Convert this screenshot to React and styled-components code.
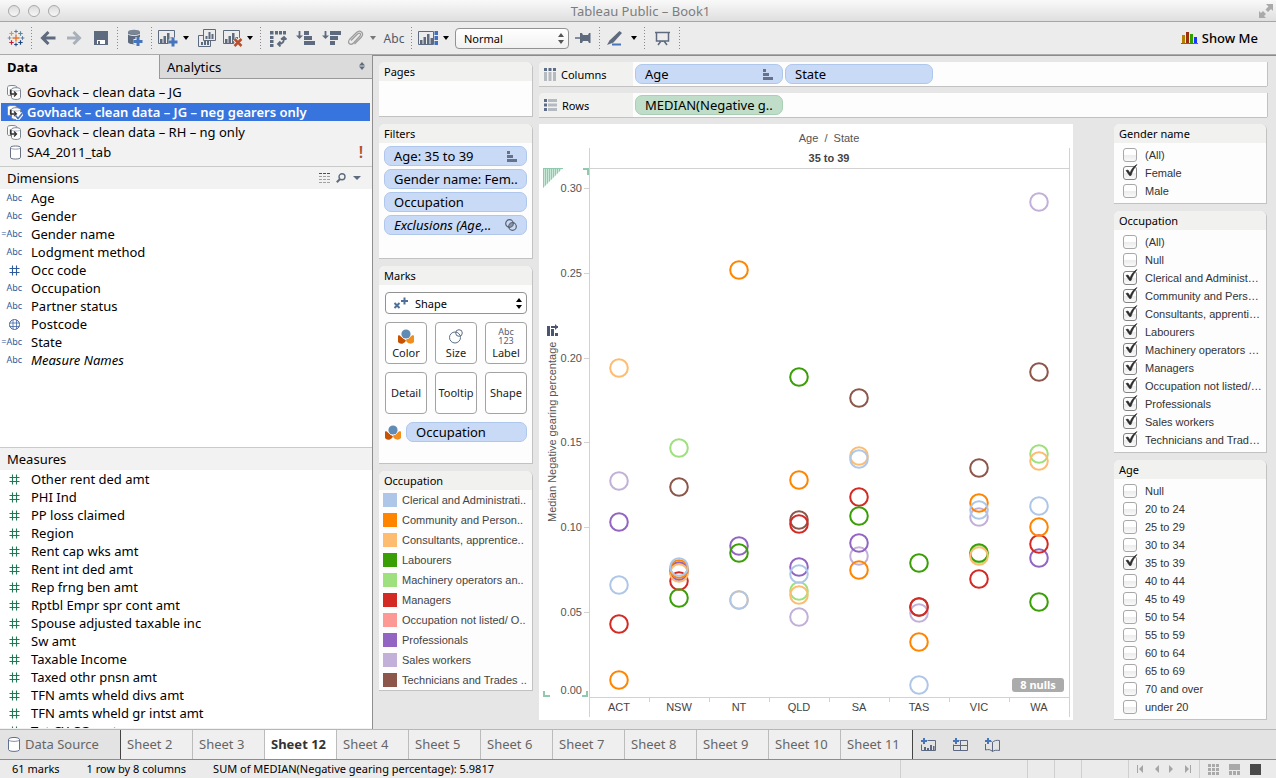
import React, { useState } from "react";
import styled, { createGlobalStyle, css } from "styled-components";

const UI = `"Noto Sans", "Open Sans", sans-serif`;
const ARIAL = `"Liberation Sans", Arial, sans-serif`;
const SLATE = "#5e6b7e";

const Global = createGlobalStyle`
  *, *::before, *::after { box-sizing: border-box; }
  body { margin: 0; font-family: ${UI}; font-size: 13px; color: #000; background: #e6e6e6; }
  h1, h2, ul, ol, p, fieldset, legend { margin: 0; padding: 0; border: 0; font-weight: 400; }
  ul, ol { list-style: none; }
  button { font-family: inherit; color: inherit; padding: 0; border: 0; background: none; cursor: pointer; }
  svg { display: block; flex: none; }
`;

/* ---------- window frame ---------- */
const Window = styled.div`
  display: flex;
  flex-direction: column;
  height: 100vh;
  min-width: 1000px;
  overflow: hidden;
`;
const TitleBar = styled.header`
  flex: none;
  display: grid;
  grid-template-columns: 1fr auto 1fr;
  align-items: center;
  height: 22px;
  padding: 0 3px 0 8px;
  background: linear-gradient(#f9f9f9, #dfdfdf);
  border-bottom: 1px solid #a6a6a6;
`;
const Lights = styled.div`
  display: flex;
  gap: 8px;
`;
const Light = styled.button`
  width: 12px;
  height: 12px;
  border-radius: 50%;
  border: 1px solid #a9a9a9;
  background: linear-gradient(#dcdcdc, #f7f7f7);
`;
const Title = styled.h1`
  font-size: 13px;
  line-height: 20px;
  color: #7d7d7d;
`;
const Expand = styled.button`
  justify-self: end;
`;

/* ---------- toolbar ---------- */
const Toolbar = styled.nav`
  flex: none;
  display: flex;
  align-items: center;
  height: 33px;
  padding-left: 3px;
  background: #ececec;
  border-bottom: 1px solid #aaa;
`;
const Tool = styled.button`
  flex: none;
  display: flex;
  align-items: center;
  justify-content: center;
  width: ${(p) => p.$w}px;
  height: 24px;
  font-size: 12px;
  color: #4e5a6b;
`;
const Sep = styled.span`
  flex: none;
  width: 1px;
  height: 22px;
  margin: 0 3px;
  background: repeating-linear-gradient(#8a8a8a 0 1px, transparent 1px 3px);
`;
const Caret = styled.span`
  width: 0;
  height: 0;
  border: ${(p) => p.$size || 3}px solid transparent;
  border-top: 4px solid ${(p) => p.$color || "#000"};
  border-bottom: 0;
`;
const SelectBox = styled.label`
  position: relative;
  display: flex;
  align-items: center;
  flex: none;
  width: ${(p) => p.$w};
  height: ${(p) => p.$h}px;
  margin: ${(p) => p.$m || 0};
`;
const Select = styled.select`
  appearance: none;
  width: 100%;
  height: 100%;
  padding: 0 16px 0 ${(p) => p.$pad}px;
  border: 1px solid #929292;
  border-radius: 4px;
  background: ${(p) => (p.$flat ? "#fff" : "linear-gradient(#fff, #f1f1f1)")};
  font: 11px ${UI};
  color: #000;
`;
const SelectIcon = styled.span`
  position: absolute;
  left: 8px;
  pointer-events: none;
`;
const SelectArrows = styled.span`
  position: absolute;
  right: 5px;
  pointer-events: none;
`;
const ShowMe = styled.button`
  display: flex;
  align-items: center;
  gap: 4px;
  margin: 0 18px 0 auto;
  font-size: 13px;
  font-weight: 500;
`;

/* ---------- data pane ---------- */
const Main = styled.main`
  flex: 1;
  display: flex;
  min-height: 0;
`;
const DataPane = styled.aside`
  flex: 0 0 373px;
  display: flex;
  flex-direction: column;
  min-height: 0;
  padding-bottom: 1px;
  background: #f2f2f2;
  border-right: 1px solid #8f8f8f;
`;
const PaneTabs = styled.div`
  display: flex;
  height: 24px;
`;
const PaneTab = styled.button`
  display: flex;
  align-items: center;
  justify-content: space-between;
  width: 159px;
  padding: 0 7px;
  font-size: 13px;
  text-align: left;
  ${(p) =>
    p.$active
      ? css`
          font-weight: 700;
        `
      : css`
          flex: 1;
          background: #dbdbdb;
          border-left: 1px solid #999;
          border-bottom: 1px solid #999;
        `}
`;
const Sources = styled.ul`
  padding: 3px 2px 4px 1px;
`;
const Source = styled.li`
  display: flex;
  align-items: center;
  height: 20px;
  padding: 0 6px;
  gap: 4px;
  line-height: 18px;
  ${(p) =>
    p.$selected &&
    css`
      height: 18px;
      margin: 1px 0;
      color: #fff;
      background: #3874dd;
      font-weight: 600;
    `}
`;
const Alert = styled.span`
  width: 2px;
  height: 12px;
  margin: 0 2px 0 auto;
  color: #b5502a;
  font-size: 16px;
  font-weight: 600;
  line-height: 12px;
  display: flex;
  justify-content: center;
`;
const FieldGroup = styled.section`
  flex: 1 1 0;
  display: flex;
  flex-direction: column;
  min-height: 0;
  border-top: 1px solid #c8cbc8;
`;
const GroupHead = styled.div`
  flex: none;
  display: flex;
  align-items: center;
  height: 22px;
  padding: 0 7px;
`;
const GroupTitle = styled.h2`
  flex: 1;
  font-size: 13px;
`;
const GroupButton = styled.button`
  display: flex;
  align-items: center;
  justify-content: center;
  width: 16px;
  height: 16px;
`;
const Fields = styled.ul`
  flex: 1;
  min-height: 0;
  overflow: hidden;
  background: #fff;
`;
const Field = styled.li`
  display: flex;
  align-items: center;
  height: 18px;
  gap: 9px;
  line-height: 18px;
  font-style: ${(p) => (p.$italic ? "italic" : "normal")};
`;
const FieldType = styled.span`
  display: flex;
  justify-content: flex-end;
  width: 22px;
  padding-right: ${(p) => (p.$glyph ? 2 : 0)}px;
  font-size: 9px;
  font-style: normal;
  color: #2f5a9e;
`;

/* ---------- workspace ---------- */
const Workspace = styled.div`
  flex: 1;
  display: flex;
  gap: 6px;
  min-width: 0;
  padding: 6px 9px 9px 6px;
  background: #e6e6e6;
  border-top: 1px solid #8b8b8b;
`;
const CardColumn = styled.div`
  flex: none;
  width: ${(p) => p.$w}px;
  min-width: 0;
  display: flex;
  flex-direction: column;
  gap: 7px;
`;
const Canvas = styled.div`
  flex: 1;
  display: flex;
  flex-direction: column;
  gap: 7px;
  min-width: 0;
`;
const CardBox = styled.section`
  flex: none;
  min-height: ${(p) => p.$min || 0}px;
  border-radius: 6px 6px 0 0;
  background: #fdfdfd;
  border-right: 1px solid #c2c2c2;
  border-bottom: 1px solid #c2c2c2;
`;
const CardTitle = styled.h2`
  height: 19px;
  padding-left: 5px;
  border-radius: 6px 5px 0 0;
  background: #f1f1ef;
  font-size: 11px;
  line-height: 19px;
  white-space: nowrap;
`;
const Pill = styled.button`
  display: flex;
  align-items: center;
  justify-content: space-between;
  width: ${(p) => p.$w || "100%"};
  height: 20px;
  padding: 0 9px;
  border: 1px solid ${(p) => (p.$green ? "#a9cfb5" : "#b0c7ec")};
  border-radius: 7px;
  background: ${(p) => (p.$green ? "#bfddc9" : "#c9daf7")};
  font-size: 13px;
  line-height: 18px;
  font-style: ${(p) => (p.$italic ? "italic" : "normal")};
  white-space: nowrap;
`;
const PillStack = styled.div`
  display: flex;
  flex-direction: column;
  gap: 3px;
  padding: 3px 5px;
`;
const MarksBody = styled.div`
  display: grid;
  grid-template-columns: repeat(3, 42px);
  justify-content: space-between;
  gap: 8px 0;
  padding: 7px 5px 0 6px;
`;
const WideRow = styled.div`
  grid-column: 1 / -1;
  display: flex;
  align-items: center;
  gap: 5px;
`;
const MarkButton = styled.button`
  display: flex;
  flex-direction: column;
  align-items: center;
  justify-content: ${(p) => (p.$icon ? "space-between" : "center")};
  height: 42px;
  padding: ${(p) => (p.$icon ? "4px 0 2px" : 0)};
  border: 1px solid #a3a3a3;
  border-radius: 4px;
  background: #fff;
  font-size: 11px;
  line-height: 16px;
  color: #222;
`;
const MarkGlyph = styled.span`
  display: flex;
  align-items: center;
  justify-content: center;
  height: 18px;
  text-align: center;
  font-size: 9px;
  line-height: 9px;
  color: #4f6180;
`;
const LegendItem = styled.li`
  display: flex;
  align-items: center;
  gap: 5px;
  height: 20px;
  padding-left: 4px;
  font: 11px ${ARIAL};
  color: #444;
  white-space: nowrap;
`;
const Swatch = styled.span`
  flex: none;
  width: 14px;
  height: 14px;
  background: ${(p) => p.$color};
`;
const Shelf = styled.div`
  flex: none;
  display: flex;
  align-items: center;
  gap: 2px;
  height: 24px;
  border-radius: 5px 0 0 0;
  background: #fdfdfd;
  box-shadow: 0 1px 0 #c2c2c2, 1px 0 0 #c2c2c2;
`;
const ShelfName = styled.div`
  display: flex;
  align-items: center;
  gap: 5px;
  width: 94px;
  height: 24px;
  padding-left: 5px;
  border-radius: 5px 0 0 0;
  background: #f1f1ef;
  font-size: 11px;
`;
const ViewRow = styled.div`
  flex: 1;
  display: flex;
  gap: 41px;
  min-height: 0;
`;
const View = styled.figure`
  position: relative;
  flex: 1;
  min-width: 0;
  margin: 0;
  background: #fff;
`;
const Chart = styled.svg`
  width: 100%;
  height: 100%;
  font-family: ${ARIAL};
  font-size: 11px;
  fill: #555;
`;
const NullBadge = styled.button`
  position: absolute;
  right: 9px;
  bottom: 28px;
  width: 52px;
  height: 14px;
  border-radius: 3px;
  background: #ababab;
  color: #fff;
  font-size: 11px;
  font-weight: 700;
  line-height: 14px;
`;
const Options = styled.div`
  padding: 3px 0 3px 9px;
`;
const Option = styled.label`
  display: flex;
  align-items: center;
  gap: 8px;
  height: 18px;
  font: 11px ${ARIAL};
  color: #333;
  white-space: nowrap;
`;
const TickBox = styled.span`
  position: relative;
  flex: none;
  width: 14px;
  height: 14px;
`;
const TickInput = styled.input`
  appearance: none;
  display: block;
  width: 14px;
  height: 14px;
  margin: 0;
  border: 1px solid ${(p) => (p.checked ? "#848484" : "#a8a8a8")};
  border-radius: 3px;
  background: linear-gradient(#fff 0 45%, #ececec 55%, #fafafa);
`;
const TickMark = styled.svg`
  position: absolute;
  left: 2px;
  top: -2px;
  pointer-events: none;
`;

/* ---------- sheet tabs and status ---------- */
const SheetBar = styled.nav`
  flex: none;
  display: flex;
  height: 31px;
  background: #e3e3e3;
  border-top: 1px solid #b7b7b7;
  border-bottom: 1px solid #8c8c8c;
`;
const SheetTab = styled.button`
  flex: none;
  display: flex;
  align-items: center;
  gap: 5px;
  width: ${(p) => p.$w || 72}px;
  padding: 0 0 1px ${(p) => (p.$w ? 8 : 6)}px;
  border-right: 1px solid ${(p) => (p.$dark ? "#444" : "#bcbcbc")};
  background: ${(p) => (p.$active ? "#fff" : p.$w ? "#e3e3e3" : "#efefef")};
  color: ${(p) => (p.$active ? "#333" : "#666")};
  font-size: 13px;
  font-weight: ${(p) => (p.$active ? 700 : 400)};
  white-space: nowrap;
`;
const NewSheetTools = styled.div`
  display: flex;
  align-items: center;
`;
const StatusBar = styled.footer`
  flex: none;
  display: flex;
  align-items: center;
  height: 18px;
  padding-left: 12px;
  background: #ebebeb;
  font-size: 11px;
  white-space: nowrap;
`;
const StatusText = styled.span`
  margin-right: 27px;
  padding-bottom: 1px;
`;
const StatusCells = styled.div`
  display: flex;
  height: 100%;
  margin-left: auto;
`;
const StatusCell = styled.div`
  display: flex;
  align-items: center;
  gap: ${(p) => p.$gap || 0}px;
  width: ${(p) => p.$w}px;
  padding-left: 8px;
  border-left: 1px solid #cfcfcf;
`;
const StatusButton = styled.button`
  display: flex;
`;

/* ---------- icons ---------- */
const Icon = ({ w = 20, h = 20, children, ...rest }) => (
  <svg width={w} height={h} viewBox={`0 0 ${w} ${h}`} fill="none" aria-hidden="true" {...rest}>
    {children}
  </svg>
);
const plus = (x, y, r) => `M${x - r} ${y}h${2 * r}M${x} ${y - r}v${2 * r}`;
const LogoIcon = () => (
  <Icon w={18} h={18}>
    <path d={plus(9, 9, 3.5)} stroke="#e8762c" strokeWidth="1.4" />
    <path d={plus(9, 2.5, 1.8)} stroke="#59799b" />
    <path d={plus(9, 15.5, 1.8)} stroke="#1f447e" />
    <path d={plus(2.5, 9, 1.8)} stroke="#6f8fae" />
    <path d={plus(15.5, 9, 1.8)} stroke="#59799b" />
    <path d={plus(4.5, 4.5, 2.2)} stroke="#eb912c" strokeWidth="1.2" />
    <path d={plus(13.5, 4.5, 2.2)} stroke="#5b879b" strokeWidth="1.2" />
    <path d={plus(4.5, 13.5, 2.2)} stroke="#c72035" strokeWidth="1.2" />
    <path d={plus(13.5, 13.5, 2.2)} stroke="#1f447e" strokeWidth="1.2" />
  </Icon>
);
const Arrow = ({ right }) => (
  <Icon w={16} h={14}>
    <path
      d={right ? "M1 7h12M7.500 1l6 6-6 6" : "M15.500 7H3M8.500 1l-6 6 6 6"}
      stroke={right ? "#a9b0b9" : SLATE}
      strokeWidth="3"
    />
  </Icon>
);
const SaveIcon = () => (
  <Icon w={14} h={14}>
    <path d="M0 0h14v14H0z" fill={SLATE} />
    <path d="M3 9h8v4H3z" fill="#fff" />
    <path d="M4 10h2v3H4z" fill={SLATE} />
  </Icon>
);
const PLUS_BLUE = "#4674bd";
const AddDataIcon = () => (
  <Icon w={16} h={18}>
    <path d="M1 3v10c0 3 12 3 12 0V3z" fill={SLATE} />
    <ellipse cx="7" cy="3" rx="6" ry="2.300" fill="#7a8696" />
    <path d="M1 4.800c1 2.200 11 2.200 12 0" stroke="#ececec" />
    <path d={plus(11, 12.5, 4.5)} stroke="#ececec" strokeWidth="5" />
    <path d={plus(11, 12.5, 4.5)} stroke={PLUS_BLUE} strokeWidth="3" />
  </Icon>
);
const Bars = ({ x = 0, y = 0 }) => (
  <path transform={`translate(${x} ${y})`} d="M0 6h2.500v4H0zM3.500 3H6v7H3.500zM7 0h2.500v10H7zM10.500 4H13v6h-2.500z" fill={SLATE} />
);
const AddSheetIcon = () => (
  <Icon w={20} h={18}>
    <path d="M.5 1.500h16v13H.5z" stroke={SLATE} />
    <Bars x={2} y={4} />
    <path d={plus(15, 13, 4.5)} stroke="#ececec" strokeWidth="5" />
    <path d={plus(15, 13, 4.5)} stroke={PLUS_BLUE} strokeWidth="3" />
  </Icon>
);
const DuplicateIcon = () => (
  <Icon w={18} h={18}>
    <path d="M.5 6.500h12v11H.5z" stroke={SLATE} />
    <path d="M3 13h2v3H3zM6 11h2v5H6zM9 12h2v4H9z" fill={SLATE} />
    <path d="M5.500.5h12v11h-12z" fill="#ececec" stroke={SLATE} />
    <path d="M7.500 7h2v3h-2zM10.500 3h2v7h-2zM13.500 5h2v5h-2z" fill={SLATE} />
  </Icon>
);
const ClearIcon = () => (
  <Icon w={20} h={18}>
    <path d="M.5 1.500h16v13H.5z" stroke={SLATE} />
    <Bars x={2} y={4} />
    <path d="M11.500 10l7 7M18.500 10l-7 7" stroke="#ececec" strokeWidth="4.500" />
    <path d="M11.500 10l7 7M18.500 10l-7 7" stroke="#b8502c" strokeWidth="2.500" />
  </Icon>
);
const SwapIcon = () => (
  <Icon w={18} h={17}>
    <path d="M1 1h3.500v3.500H1zM6 1h3v3.500H6zM10 1h3v3.500h-3zM14 1h3v3.500h-3zM1 6h3.500v3H1zM1 10h3.500v3H1zM1 14h3.500v3H1z" fill={SLATE} />
    <path d="M15 7.500c0 4.500-1 6.500-6 6.500M12 9.500L15 7l2.500 2.500M11.500 11.500L9 14l2.500 2.500" stroke={SLATE} strokeWidth="1.800" />
  </Icon>
);
const SortIcon = ({ desc }) => (
  <Icon w={19} h={16}>
    <path d="M3.500 1v6" stroke={SLATE} strokeWidth="1.800" />
    <path d="M0 5.500h7L3.500 9z" fill={SLATE} />
    <path
      d={desc ? "M8 1h11v4H8zM8 6h8v4H8zM8 11h5v4H8z" : "M8 1h5v4H8zM8 6h8v4H8zM8 11h11v4H8z"}
      fill={SLATE}
    />
  </Icon>
);
const ClipIcon = () => (
  <Icon w={17} h={17}>
    <path
      d="M4 10.500l6.500-6.500c2-2 4 0 2.500 2L6.500 13c-3 3-6.500 0-4-3.500L9.500 2.500c3.500-3.500 8 .5 5 4.500l-7 7"
      stroke="#9b9b9b"
      strokeWidth="1.200"
    />
  </Icon>
);
const FitIcon = () => (
  <Icon w={20} h={15}>
    <path d="M.5.5h15v13H.5z" stroke={SLATE} />
    <Bars x={2} y={3} />
    <path d="M16.500 0H20v4h-3.500zM16.500 5H20v4h-3.500zM16.500 10H20v4h-3.500z" fill="#3f6fc0" />
  </Icon>
);
const PinIcon = () => (
  <Icon w={16} h={12}>
    <path d="M0 6h6" stroke={SLATE} strokeWidth="1.500" />
    <path d="M5 1h2l1 2h5l1-2h1.500v10H14l-1-2H8l-1 2H5z" fill={SLATE} />
  </Icon>
);
const PenIcon = () => (
  <Icon w={16} h={15}>
    <path d="M12.500 0L15 2 6.500 11.500 0 14l2.500-4.500z" fill={SLATE} />
    <path d="M5 13.500h9" stroke={PLUS_BLUE} strokeWidth="2" />
  </Icon>
);
const PresentIcon = () => (
  <Icon w={15} h={15}>
    <path d="M0 1.500h15M1.500 2v8h12V2M7.500 10v1M6 10l-3 4M9 10l3 4" stroke={SLATE} strokeWidth="1.500" />
  </Icon>
);
const ShowMeIcon = () => (
  <Icon w={17} h={12}>
    <path d="M1 3h3v8H1z" fill="#b58200" />
    <path d="M5 0h3v11H5z" fill="#9c2f10" />
    <path d="M9 2h3v9H9z" fill="#2fa000" />
    <path d="M13 5h3v6h-3z" fill="#1a33ff" />
    <path d="M0 11.500h17" stroke="#667" />
  </Icon>
);
const ExpandIcon = () => (
  <Icon w={14} h={14}>
    <path d="M7 0h7v7l-2-2-3 3-2.500-2.500 3-3zM0 7l2 2 2-2 3 3-2 2 2 2H0z" fill="#aaa" />
  </Icon>
);
const UpDown = ({ color = "#555" }) => (
  <Icon w={6} h={11}>
    <path d="M3 0l3 4H0zM3 11L0 7h6z" fill={color} />
  </Icon>
);
const Cylinder = () => (
  <Icon w={12} h={15}>
    <path d="M.5 2.500v10c0 2.500 11 2.500 11 0v-10c0-2.700-11-2.700-11 0z" fill="#fff" stroke="#5e6f8f" />
    <path d="M.5 3c1 1.800 10 1.800 11 0" stroke="#5e6f8f" strokeWidth=".8" />
  </Icon>
);
const DatabaseIcon = () => (
  <Icon w={16} h={15}>
    <path d="M3.500 2.500v10c0 2 10 2 10 0v-10c0-2-10-2-10 0z" fill="#fff" stroke="#667082" />
    <path d="M3.500 3c1 1.500 9 1.500 10 0" stroke="#99a" />
  </Icon>
);
const ExtractIcon = ({ checked }) => (
  <Icon w={16} h={15}>
    <path d="M5 10.500H2.500c-1.500 0-2-.6-2-1.500V2.500C.5 1 2 .5 5 .5s5 .5 5 2v1" fill="#fff" stroke="#7d8592" />
    <path d="M4.500 4.500v8c0 2.600 9 2.600 9 0v-8c0-2.400-9-2.400-9 0z" fill="#fff" stroke="#7d8592" />
    <path d="M4.500 4.800c1 1.600 8 1.600 9 0" stroke="#b4bac4" />
    <path d="M3.500 4.500v4.500H9M7 6.500L9.500 9 7 11.500" stroke="#333" strokeWidth="1.300" />
    {checked && <path d="M8.500 10.500l2.500 3L15.500 8" stroke="#fff" strokeWidth="4" />}
    {checked && <path d="M8.500 10.500l2.500 3L15.500 8" stroke="#4a73b5" strokeWidth="1.600" />}
  </Icon>
);
const HashIcon = ({ color }) => (
  <Icon w={11} h={11}>
    <path d="M.5 3.500h10M.5 7.500h10M3.500.5v10M7.500.5v10" stroke={color} strokeWidth="1.100" />
  </Icon>
);
const GlobeIcon = () => (
  <Icon w={11} h={11}>
    <circle cx="5.500" cy="5.500" r="5" stroke="#4468a5" />
    <path d="M.5 4h10M.5 7.500h10M4 1v9M7.500 1v9" stroke="#4468a5" strokeWidth=".8" />
  </Icon>
);
const ListIcon = () => (
  <Icon w={12} h={10}>
    <path d="M0 .5h12" stroke="#444f60" strokeDasharray="3 1" />
    <path d="M0 3.500h12M0 6.500h12M0 9.500h12" stroke="#a2a2a2" strokeDasharray="3 1" />
  </Icon>
);
const FindIcon = () => (
  <Icon w={10} h={10}>
    <circle cx="6" cy="3.800" r="3" stroke={SLATE} strokeWidth="1.400" />
    <path d="M4 6L.8 9.200" stroke={SLATE} strokeWidth="2" />
  </Icon>
);
const SortPillIcon = () => (
  <Icon w={10} h={11}>
    <path d="M0 0h3v3H0zM0 4h6v3H0zM0 8h10v3H0z" fill="#66728a" />
  </Icon>
);
const SetIcon = () => (
  <Icon w={12} h={12}>
    <path d="M4 7.800C4 5 6 4 8 4.200 8 7 6.500 8 4 7.800z" fill="#8b95a4" />
    <circle cx="4.500" cy="4.500" r="3.800" stroke="#55606f" strokeWidth="1.200" />
    <circle cx="7.500" cy="7.500" r="3.800" stroke="#55606f" strokeWidth="1.200" />
  </Icon>
);
const ShapeIcon = () => (
  <Icon w={16} h={12}>
    <path d="M1.500 6l5 5M6.500 6l-5 5" stroke="#4f7099" strokeWidth="2" />
    <path d={plus(11.5, 4, 3.5)} stroke="#4f7099" strokeWidth="2" />
  </Icon>
);
const ColorIcon = () => (
  <Icon w={16} h={15}>
    <path d="M1 6a4.700 4.700 0 1 0 7 5.500z" fill="#c85200" />
    <path d="M15 6a4.700 4.700 0 1 1-6.500 6.500c-.5-1-.5-2 0-3z" fill="#f28e1c" />
    <circle cx="8" cy="5" r="5.200" fill="#fff" />
    <circle cx="8" cy="5" r="4.600" fill="#5f8bb5" />
  </Icon>
);
const SizeIcon = () => (
  <Icon w={14} h={15}>
    <circle cx="6" cy="8.500" r="5.500" stroke="#5c6e88" />
    <circle cx="10" cy="4" r="3.300" stroke="#5c6e88" />
  </Icon>
);
const ColumnsIcon = () => (
  <Icon w={12} h={13}>
    <path d="M0 0h3v3H0zM4.500 0h3v3h-3zM9 0h3v3H9z" fill="#5d6c86" />
    <path d="M0 4h3v9H0zM4.500 4h3v9h-3zM9 4h3v9H9z" fill="#b5bac1" />
  </Icon>
);
const RowsIcon = () => (
  <Icon w={13} h={12}>
    <path d="M0 0h3v3H0zM0 4.500h3v3H0zM0 9h3v3H0z" fill="#5d6c86" />
    <path d="M4 0h9v3H4zM4 4.500h9v3H4zM4 9h9v3H4z" fill="#b5bac1" />
  </Icon>
);
const NewIcon = ({ children }) => (
  <Icon w={16} h={14}>
    <path d="M6.500 2.500h8v10H.5V6.500" stroke="#5b6880" />
    {children}
    <path d={plus(3, 3, 3)} stroke={PLUS_BLUE} strokeWidth="2" />
  </Icon>
);
const NewStoryIcon = () => (
  <Icon w={16} h={14}>
    <path d="M.5 6v6c3-.8 5-.5 7 1.500V4.500C7 3.500 6.500 3 5.500 2.700M7.500 4.500c1.500-2 4-2.500 7-2v10c-3-.5-5.500-.3-7 1" stroke="#5b6880" />
    <path d={plus(3, 3, 3)} stroke={PLUS_BLUE} strokeWidth="2" />
  </Icon>
);

/* ---------- data ---------- */
const SOURCES = [
  { name: "Govhack – clean data – JG" },
  { name: "Govhack – clean data – JG – neg gearers only", selected: true },
  { name: "Govhack – clean data – RH – ng only" },
  { name: "SA4_2011_tab", plain: true, alert: true },
];
const DIMENSIONS = [
  ["Abc", "Age"],
  ["Abc", "Gender"],
  ["=Abc", "Gender name"],
  ["Abc", "Lodgment method"],
  ["#", "Occ code"],
  ["Abc", "Occupation"],
  ["Abc", "Partner status"],
  ["globe", "Postcode"],
  ["=Abc", "State"],
  ["Abc", "Measure Names", true],
];
const MEASURES = [
  "Other rent ded amt", "PHI Ind", "PP loss claimed", "Region", "Rent cap wks amt", "Rent int ded amt",
  "Rep frng ben amt", "Rptbl Empr spr cont amt", "Spouse adjusted taxable inc", "Sw amt", "Taxable Income",
  "Taxed othr pnsn amt", "TFN amts wheld divs amt", "TFN amts wheld gr intst amt", "Tot CY CG amt",
];
const OCCUPATIONS = [
  { id: "cler", color: "#aec7e8", legend: "Clerical and Administrati..", filter: "Clerical and Administ…" },
  { id: "comm", color: "#ff8500", legend: "Community and Person..", filter: "Community and Pers…" },
  { id: "cons", color: "#fdbc6f", legend: "Consultants, apprentice..", filter: "Consultants, apprenti…" },
  { id: "lab", color: "#3a9e06", legend: "Labourers", filter: "Labourers" },
  { id: "mach", color: "#9ee07d", legend: "Machinery operators an..", filter: "Machinery operators …" },
  { id: "mgr", color: "#d32a24", legend: "Managers", filter: "Managers" },
  { id: "none", color: "#fd9994", legend: "Occupation not listed/ O..", filter: "Occupation not listed/…" },
  { id: "prof", color: "#9165c1", legend: "Professionals", filter: "Professionals" },
  { id: "sales", color: "#c3b0d9", legend: "Sales workers", filter: "Sales workers" },
  { id: "tech", color: "#8c564a", legend: "Technicians and Trades ..", filter: "Technicians and Trad…" },
];
/* Median negative gearing per state, as height above the zero line. */
const SERIES = {
  ACT: { cons: 329, sales: 216, prof: 175, cler: 112, mgr: 73, comm: 17 },
  NSW: { mach: 249, tech: 210, cler: 130, comm: 128, prof: 126, sales: 125, cons: 124, mgr: 116, lab: 99 },
  NT: { comm: 427, prof: 151, lab: 144, cler: 97, cons: 97 },
  QLD: { lab: 320, comm: 217, tech: 177, mgr: 173, prof: 130, cler: 123, mach: 106, cons: 102, sales: 80 },
  SA: { tech: 299, cons: 241, cler: 238, mgr: 200, lab: 181, prof: 154, sales: 141, comm: 127 },
  TAS: { lab: 134, mgr: 90, tech: 90, sales: 84, comm: 55, cler: 12 },
  VIC: { tech: 229, comm: 194, cler: 187, sales: 180, lab: 144, mach: 143, cons: 141, mgr: 118 },
  WA: { sales: 495, tech: 325, mach: 243, cons: 236, cler: 191, comm: 170, mgr: 153, prof: 139, lab: 95 },
};
const TICKS = [["0.30", 64], ["0.25", 149], ["0.20", 234], ["0.15", 318], ["0.10", 403], ["0.05", 488]];
const AGES = [
  "Null", "20 to 24", "25 to 29", "30 to 34", "35 to 39", "40 to 44", "45 to 49", "50 to 54", "55 to 59",
  "60 to 64", "65 to 69", "70 and over", "under 20",
];
const SHEETS = [2, 3, 12, 4, 5, 6, 7, 8, 9, 10, 11];

/* ---------- composed parts ---------- */
const Card = ({ title, min, children }) => (
  <CardBox $min={min}>
    <CardTitle>{title}</CardTitle>
    {children}
  </CardBox>
);

const FilterCard = ({ title, options, initial }) => {
  const [on, setOn] = useState(() => new Set(initial));
  const toggle = (o) =>
    setOn((prev) => {
      const next = new Set(prev);
      next.has(o) ? next.delete(o) : next.add(o);
      return next;
    });
  return (
    <Card title={title}>
      <Options>
        {options.map((o) => (
          <Option key={o}>
            <TickBox>
              <TickInput type="checkbox" checked={on.has(o)} onChange={() => toggle(o)} />
              {on.has(o) && (
                <TickMark width="13" height="13" viewBox="0 0 13 13" fill="none">
                  <path d="M1 6.500l2-.5 2 3C6.500 5 8.500 2.500 12 .5 9 4 7.300 7.500 6 11.500H4.500z" fill="#2b2b2b" stroke="#2b2b2b" strokeWidth=".6" />
                </TickMark>
              )}
            </TickBox>
            {o}
          </Option>
        ))}
      </Options>
    </Card>
  );
};

const FieldTypeMark = ({ type, color = "#2f5a9e" }) => {
  if (type === "#") return <FieldType $glyph><HashIcon color={color} /></FieldType>;
  if (type === "globe") return <FieldType $glyph><GlobeIcon /></FieldType>;
  return <FieldType>{type}</FieldType>;
};

const LEFT = 50;
const RIGHT = 530;
const BASE = 573;
const HEAD = 44;
const STEP = 60;

const DotPlot = () => (
  <Chart viewBox="0 0 534 596" role="img" aria-label="Median negative gearing percentage by state">
    <g stroke="#d2d2d2" shapeRendering="crispEdges">
      <path d={`M${LEFT + 0.5} 24V593M${RIGHT + 0.5} 24V593M${LEFT} ${HEAD + 0.5}H${RIGHT}M${LEFT} ${BASE + 0.5}H${RIGHT}`} />
      {TICKS.map(([t, y]) => (
        <path key={t} d={`M45 ${y + 0.5}h5`} />
      ))}
      {Object.keys(SERIES).slice(1).map((s, i) => (
        <path key={s} d={`M${LEFT + STEP * (i + 1) + 0.5} ${BASE}v5`} />
      ))}
    </g>
    <text x="290" y="18" textAnchor="middle">Age{"\u00a0\u00a0/\u00a0\u00a0"}State</text>
    <text x="290" y="38" textAnchor="middle" fontWeight="700" fill="#444">35 to 39</text>
    {TICKS.map(([t, y]) => (
      <text key={t} x="43" y={y + 4} textAnchor="end">{t}</text>
    ))}
    <text x="43" y="570" textAnchor="end">0.00</text>
    <text transform="translate(17 398) rotate(-90)">Median Negative gearing percentage</text>
    <path d="M4 44h20L4 64z" fill="#c9e8d7" />
    <path d="M4.500 44v19.500M6.500 44v17.500M8.500 44v15.500M10.500 44v13.500M12.500 44v11.500M14.500 44v9.500M16.500 44v7.500M18.500 44v5.500M20.500 44v3.500M4 44.500h20" stroke="#92c9ae" />
    <path d="M44 45h5v6M5 567v5h6M48 567v5h-5" fill="none" stroke="#92c9ae" strokeWidth="2" />
    <path d="M8 202h3v10H8zM12 205h3v7h-3zM16 209h3v3h-3zM12 202h7v2h-7zM16 200l3 3-3 3z" fill="#4a5670" />
    {Object.entries(SERIES).map(([state, points], i) => {
      const x = LEFT + STEP / 2 + STEP * i;
      return (
        <g key={state}>
          <text x={x} y="587" textAnchor="middle" fill="#444">{state}</text>
          {[...OCCUPATIONS].reverse().filter((o) => o.id in points).map((o) => (
            <circle key={o.id} cx={x} cy={BASE - points[o.id]} r="8.800" fill="none" stroke={o.color} strokeWidth="2" />
          ))}
        </g>
      );
    })}
  </Chart>
);

const CaretTool = ({ w, color, label }) => (
  <Tool $w={w} aria-label={label}><Caret $color={color} /></Tool>
);

export default function App() {
  return (
    <>
      <Global />
      <Window>
        <TitleBar>
          <Lights>
            <Light aria-label="Close" />
            <Light aria-label="Minimize" />
            <Light aria-label="Zoom" />
          </Lights>
          <Title>Tableau Public – Book1</Title>
          <Expand aria-label="Full screen"><ExpandIcon /></Expand>
        </TitleBar>

        <Toolbar aria-label="Toolbar">
          <Tool $w={25} aria-label="Start page"><LogoIcon /></Tool>
          <Sep />
          <Tool $w={26} aria-label="Undo"><Arrow /></Tool>
          <Tool $w={26} aria-label="Redo"><Arrow right /></Tool>
          <Tool $w={27} aria-label="Save"><SaveIcon /></Tool>
          <Sep />
          <Tool $w={27} aria-label="New data source"><AddDataIcon /></Tool>
          <Sep />
          <Tool $w={26} aria-label="New worksheet"><AddSheetIcon /></Tool>
          <CaretTool w={10} label="New worksheet options" />
          <Tool $w={32} aria-label="Duplicate sheet"><DuplicateIcon /></Tool>
          <Tool $w={20} aria-label="Clear sheet"><ClearIcon /></Tool>
          <CaretTool w={14} label="Clear options" />
          <Sep />
          <Tool $w={28} aria-label="Swap rows and columns"><SwapIcon /></Tool>
          <Tool $w={26} aria-label="Sort ascending"><SortIcon /></Tool>
          <Tool $w={26} aria-label="Sort descending"><SortIcon desc /></Tool>
          <Tool $w={22} aria-label="Group members"><ClipIcon /></Tool>
          <CaretTool w={14} color="#777" label="Group options" />
          <Tool $w={28}>Abc</Tool>
          <Sep />
          <Tool $w={26} aria-label="View cards"><FitIcon /></Tool>
          <CaretTool w={10} label="View card options" />
          <SelectBox $w="114px" $h={21} $m="0 0 0 4px">
            <Select $pad={8} aria-label="Fit"><option>Normal</option></Select>
            <SelectArrows><UpDown /></SelectArrows>
          </SelectBox>
          <Tool $w={27} aria-label="Fix axes"><PinIcon /></Tool>
          <Sep />
          <Tool $w={24} aria-label="Highlight"><PenIcon /></Tool>
          <CaretTool w={14} label="Highlight options" />
          <Sep />
          <Tool $w={28} aria-label="Presentation mode"><PresentIcon /></Tool>
          <Sep />
          <ShowMe><ShowMeIcon />Show Me</ShowMe>
        </Toolbar>

        <Main>
          <DataPane>
            <PaneTabs>
              <PaneTab $active>Data</PaneTab>
              <PaneTab>Analytics<Icon w={6} h={9}><path d="M3 0l3 3.500H0zM3 8L0 4.500h6z" fill={SLATE} /></Icon></PaneTab>
            </PaneTabs>
            <Sources>
              {SOURCES.map((s) => (
                <Source key={s.name} $selected={s.selected}>
                  {s.plain ? <DatabaseIcon /> : <ExtractIcon checked={s.selected} />}
                  {s.name}
                  {s.alert && <Alert>!</Alert>}
                </Source>
              ))}
            </Sources>
            <FieldGroup>
              <GroupHead>
                <GroupTitle>Dimensions</GroupTitle>
                <GroupButton aria-label="View data"><ListIcon /></GroupButton>
                <GroupButton aria-label="Find field"><FindIcon /></GroupButton>
                <GroupButton aria-label="More"><Caret $size={4} $color={SLATE} /></GroupButton>
              </GroupHead>
              <Fields>
                {DIMENSIONS.map(([type, name, italic]) => (
                  <Field key={name} $italic={italic}>
                    <FieldTypeMark type={type} />
                    {name}
                  </Field>
                ))}
              </Fields>
            </FieldGroup>
            <FieldGroup>
              <GroupHead><GroupTitle>Measures</GroupTitle></GroupHead>
              <Fields>
                {MEASURES.map((name) => (
                  <Field key={name}>
                    <FieldTypeMark type="#" color="#1e7a55" />
                    {name}
                  </Field>
                ))}
              </Fields>
            </FieldGroup>
          </DataPane>

          <Workspace>
            <CardColumn $w={154}>
              <Card title="Pages" min={55} />
              <Card title="Filters" min={135}>
                <PillStack>
                  <Pill>Age: 35 to 39<SortPillIcon /></Pill>
                  <Pill>Gender name: Fem..</Pill>
                  <Pill>Occupation</Pill>
                  <Pill $italic>Exclusions (Age,..<SetIcon /></Pill>
                </PillStack>
              </Card>
              <Card title="Marks" min={198}>
                <MarksBody>
                  <WideRow>
                    <SelectBox $w="100%" $h={22}>
                      <Select $flat $pad={29} aria-label="Mark type"><option>Shape</option></Select>
                      <SelectIcon><ShapeIcon /></SelectIcon>
                      <SelectArrows><UpDown color="#000" /></SelectArrows>
                    </SelectBox>
                  </WideRow>
                  <MarkButton $icon><MarkGlyph><ColorIcon /></MarkGlyph>Color</MarkButton>
                  <MarkButton $icon><MarkGlyph><SizeIcon /></MarkGlyph>Size</MarkButton>
                  <MarkButton $icon><MarkGlyph>Abc<br />123</MarkGlyph>Label</MarkButton>
                  <MarkButton>Detail</MarkButton>
                  <MarkButton>Tooltip</MarkButton>
                  <MarkButton>Shape</MarkButton>
                  <WideRow><ColorIcon /><Pill>Occupation</Pill></WideRow>
                </MarksBody>
              </Card>
              <Card title="Occupation">
                <ul>
                  {OCCUPATIONS.map((o) => (
                    <LegendItem key={o.id}><Swatch $color={o.color} />{o.legend}</LegendItem>
                  ))}
                </ul>
              </Card>
            </CardColumn>

            <Canvas>
              <Shelf>
                <ShelfName><ColumnsIcon />Columns</ShelfName>
                <Pill $w="148px">Age<SortPillIcon /></Pill>
                <Pill $w="148px">State</Pill>
              </Shelf>
              <Shelf>
                <ShelfName><RowsIcon />Rows</ShelfName>
                <Pill $green $w="148px">MEDIAN(Negative g..</Pill>
              </Shelf>
              <ViewRow>
                <View>
                  <DotPlot />
                  <NullBadge>8 nulls</NullBadge>
                </View>
                <CardColumn $w={153}>
                  <FilterCard title="Gender name" options={["(All)", "Female", "Male"]} initial={["Female"]} />
                  <FilterCard
                    title="Occupation"
                    options={["(All)", "Null", ...OCCUPATIONS.map((o) => o.filter)]}
                    initial={OCCUPATIONS.map((o) => o.filter)}
                  />
                  <FilterCard title="Age" options={AGES} initial={["35 to 39"]} />
                </CardColumn>
              </ViewRow>
            </Canvas>
          </Workspace>
        </Main>

        <SheetBar aria-label="Sheets">
          <SheetTab $w={121} $dark><Cylinder />Data Source</SheetTab>
          {SHEETS.map((n) => (
            <SheetTab key={n} $active={n === 12} $dark={n === 11}>Sheet {n}</SheetTab>
          ))}
          <NewSheetTools>
            <Tool $w={32} aria-label="New worksheet">
              <NewIcon><path d="M3 9h2v3H3zM6 10h2v2H6zM9 7h2v5H9zM12 8h1.500v4H12z" fill="#5b6880" /></NewIcon>
            </Tool>
            <Tool $w={32} aria-label="New dashboard">
              <NewIcon><path d="M.5 7.500h14M7.500 2.500v10" stroke="#5b6880" /></NewIcon>
            </Tool>
            <Tool $w={32} aria-label="New story"><NewStoryIcon /></Tool>
          </NewSheetTools>
        </SheetBar>
        <StatusBar>
          <StatusText>61 marks</StatusText>
          <StatusText>1 row by 8 columns</StatusText>
          <StatusText>SUM of MEDIAN(Negative gearing percentage): 5.9817</StatusText>
          <StatusCells>
            <StatusCell $w={127} />
            <StatusCell $w={27} />
            <StatusCell $w={27} />
            <StatusCell $w={47} />
            <StatusCell $w={71} $gap={10}>
              <StatusButton aria-label="First"><Icon w={7} h={8}><path d="M.5 0v8" stroke="#a5a5a5" /><path d="M6 0v8L2 4z" fill="#a5a5a5" /></Icon></StatusButton>
              <StatusButton aria-label="Previous"><Icon w={5} h={8}><path d="M5 0v8L1 4z" fill="#a5a5a5" /></Icon></StatusButton>
              <StatusButton aria-label="Next"><Icon w={5} h={8}><path d="M0 0v8l4-4z" fill="#a5a5a5" /></Icon></StatusButton>
              <StatusButton aria-label="Last"><Icon w={7} h={8}><path d="M6.500 0v8" stroke="#a5a5a5" /><path d="M1 0v8l4-4z" fill="#a5a5a5" /></Icon></StatusButton>
            </StatusCell>
            <StatusCell $w={77} $gap={10}>
              <StatusButton aria-label="Sheet sorter"><Icon w={11} h={11}><path d="M0 0h3v3H0zM4 0h3v3H4zM8 0h3v3H8zM0 4h3v3H0zM4 4h3v3H4zM8 4h3v3H8zM0 8h3v3H0zM4 8h3v3H4zM8 8h3v3H8z" fill="#a9a9a9" /></Icon></StatusButton>
              <StatusButton aria-label="Filmstrip"><Icon w={11} h={11}><path d="M0 0h11v6H0zM0 7h3v4H0zM4 7h3v4H4zM8 7h3v4H8z" fill="#a9a9a9" /></Icon></StatusButton>
              <StatusButton aria-label="Tabs"><Icon w={11} h={11}><path d="M0 0h11v11H0z" fill="#4a4a4a" /></Icon></StatusButton>
            </StatusCell>
          </StatusCells>
        </StatusBar>
      </Window>
    </>
  );
}
